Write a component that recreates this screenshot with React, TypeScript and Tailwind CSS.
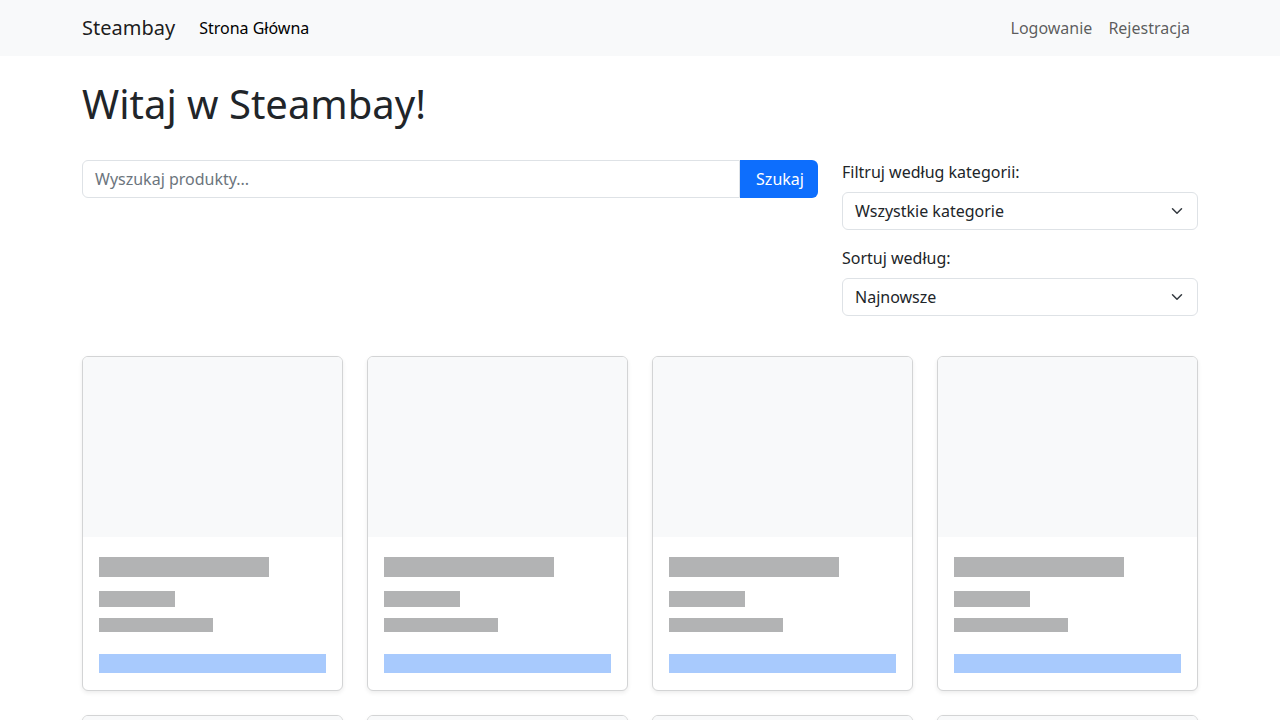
import React from "react";

function Chevron() {
  return (
    <svg width="12" height="12" viewBox="0 0 16 16" className="absolute right-[14px] top-1/2 -translate-y-1/2">
      <path d="M2 5l6 6 6-6" fill="none" stroke="#343a40" strokeWidth="2" strokeLinecap="round" strokeLinejoin="round" />
    </svg>
  );
}

function Card() {
  return (
    <div className="flex flex-col rounded-[6px] border border-[#d3d4d5] bg-white shadow-[0_2px_4px_rgba(0,0,0,0.075)] overflow-hidden">
      <div className="h-[180px] bg-[#f8f9fa]" />
      <div className="px-4 pt-5 pb-[17px]">
        <div className="h-[20px] w-[170px] bg-[#b2b3b4]" />
        <div className="mt-[14px] h-[16px] w-[76px] bg-[#b2b3b4]" />
        <div className="mt-[11px] h-[14px] w-[114px] bg-[#b2b3b4]" />
        <div className="mt-[22px] h-[19px] w-full bg-[#a8cafd]" />
      </div>
    </div>
  );
}

export default function App() {
  const font = { fontFamily: '"Noto Sans", "Liberation Sans", sans-serif' };
  return (
    <div className="min-h-screen bg-white text-[#212529]" style={font}>
      <nav className="h-[56px] bg-[#f8f9fa]">
        <div className="mx-auto flex h-full w-[1140px] items-center px-3">
          <span className="text-[20px] leading-[30px] text-[rgba(0,0,0,0.9)]">Steambay</span>
          <span className="ml-6 text-[16px] text-black">Strona Główna</span>
          <div className="ml-auto flex text-[16px] text-[rgba(0,0,0,0.65)]">
            <span className="px-2">Logowanie</span>
            <span className="px-2">Rejestracja</span>
          </div>
        </div>
      </nav>
      <main className="mx-auto w-[1140px] px-3">
        <h1 className="mt-6 text-[40px] leading-[48px] font-normal">Witaj w Steambay!</h1>
        <div className="mt-8 flex gap-6">
          <div className="w-[736px]">
            <div className="flex h-[38px]">
              <div className="flex flex-1 items-center rounded-l-[6px] border border-[#dee2e6] px-3 text-[16px] text-[#6c757d]">
                Wyszukaj produkty...
              </div>
              <button className="w-[78px] rounded-r-[6px] bg-[#0d6efd] pl-[2px] text-[16px] text-white">Szukaj</button>
            </div>
          </div>
          <div className="flex-1">
            <div className="mb-2 text-[16px] leading-[24px]">Filtruj według kategorii:</div>
            <div className="relative flex h-[38px] items-center rounded-[6px] border border-[#dee2e6] px-3 text-[16px]">
              Wszystkie kategorie
              <Chevron />
            </div>
            <div className="mt-4 mb-2 text-[16px] leading-[24px]">Sortuj według:</div>
            <div className="relative flex h-[38px] items-center rounded-[6px] border border-[#dee2e6] px-3 text-[16px]">
              Najnowsze
              <Chevron />
            </div>
          </div>
        </div>
        <div className="mt-10 grid grid-cols-4 gap-6 pb-6">
          {Array.from({ length: 8 }).map((_, i) => (
            <Card key={i} />
          ))}
        </div>
      </main>
    </div>
  );
}
